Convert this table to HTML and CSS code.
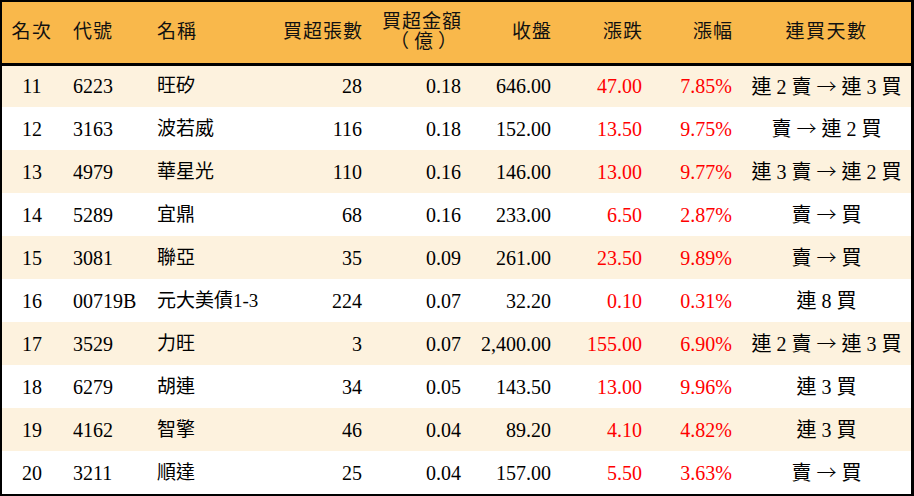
FILE: index.html
```html
<!DOCTYPE html>
<html lang="zh-Hant">
<head>
<meta charset="utf-8">
<title>買超排行</title>
<link rel="stylesheet" href="styles.css">
</head>
<body>
<div class="frame">
<table class="rank">
<colgroup>
<col class="c-rank"><col class="c-code"><col class="c-name"><col class="c-qty"><col class="c-amt"><col class="c-close"><col class="c-chg"><col class="c-pct"><col class="c-days">
</colgroup>
<thead>
<tr>
<th class="ctr">名次</th><th class="lft pad-code">代號</th><th class="lft">名稱</th><th class="rgt">買超張數</th><th class="rgt">買超金額<br><span class="unit">（億）</span></th><th class="rgt">收盤</th><th class="rgt">漲跌</th><th class="rgt">漲幅</th><th class="ctr">連買天數</th>
</tr>
</thead>
<tbody>
<tr><td class="ctr">11</td><td class="lft pad-code">6223</td><td class="lft nm">旺矽</td><td class="rgt">28</td><td class="rgt">0.18</td><td class="rgt">646.00</td><td class="rgt up">47.00</td><td class="rgt up">7.85%</td><td class="ctr">連 2 賣 <span class="arr">→</span> 連 3 買</td></tr>
<tr><td class="ctr">12</td><td class="lft pad-code">3163</td><td class="lft nm">波若威</td><td class="rgt">116</td><td class="rgt">0.18</td><td class="rgt">152.00</td><td class="rgt up">13.50</td><td class="rgt up">9.75%</td><td class="ctr">賣 <span class="arr">→</span> 連 2 買</td></tr>
<tr><td class="ctr">13</td><td class="lft pad-code">4979</td><td class="lft nm">華星光</td><td class="rgt">110</td><td class="rgt">0.16</td><td class="rgt">146.00</td><td class="rgt up">13.00</td><td class="rgt up">9.77%</td><td class="ctr">連 3 賣 <span class="arr">→</span> 連 2 買</td></tr>
<tr><td class="ctr">14</td><td class="lft pad-code">5289</td><td class="lft nm">宜鼎</td><td class="rgt">68</td><td class="rgt">0.16</td><td class="rgt">233.00</td><td class="rgt up">6.50</td><td class="rgt up">2.87%</td><td class="ctr">賣 <span class="arr">→</span> 買</td></tr>
<tr><td class="ctr">15</td><td class="lft pad-code">3081</td><td class="lft nm">聯亞</td><td class="rgt">35</td><td class="rgt">0.09</td><td class="rgt">261.00</td><td class="rgt up">23.50</td><td class="rgt up">9.89%</td><td class="ctr">賣 <span class="arr">→</span> 買</td></tr>
<tr><td class="ctr">16</td><td class="lft pad-code">00719B</td><td class="lft nm">元大美債1-3</td><td class="rgt">224</td><td class="rgt">0.07</td><td class="rgt">32.20</td><td class="rgt up">0.10</td><td class="rgt up">0.31%</td><td class="ctr">連 8 買</td></tr>
<tr><td class="ctr">17</td><td class="lft pad-code">3529</td><td class="lft nm">力旺</td><td class="rgt">3</td><td class="rgt">0.07</td><td class="rgt">2,400.00</td><td class="rgt up">155.00</td><td class="rgt up">6.90%</td><td class="ctr">連 2 賣 <span class="arr">→</span> 連 3 買</td></tr>
<tr><td class="ctr">18</td><td class="lft pad-code">6279</td><td class="lft nm">胡連</td><td class="rgt">34</td><td class="rgt">0.05</td><td class="rgt">143.50</td><td class="rgt up">13.00</td><td class="rgt up">9.96%</td><td class="ctr">連 3 買</td></tr>
<tr><td class="ctr">19</td><td class="lft pad-code">4162</td><td class="lft nm">智擎</td><td class="rgt">46</td><td class="rgt">0.04</td><td class="rgt">89.20</td><td class="rgt up">4.10</td><td class="rgt up">4.82%</td><td class="ctr">連 3 買</td></tr>
<tr><td class="ctr">20</td><td class="lft pad-code">3211</td><td class="lft nm">順達</td><td class="rgt">25</td><td class="rgt">0.04</td><td class="rgt">157.00</td><td class="rgt up">5.50</td><td class="rgt up">3.63%</td><td class="ctr">賣 <span class="arr">→</span> 買</td></tr>
</tbody>
</table>
</div>
</body>
</html>
```

FILE: styles.css
```css
html, body {
  margin: 0;
  padding: 0;
  background: #ffffff;
}

.frame {
  width: 909px;
  border-top: 2px solid #000;
  border-left: 2px solid #000;
  border-right: 3px solid #000;
  border-bottom: 2px solid #000;
}

.rank {
  width: 909px;
  table-layout: fixed;
  border-collapse: collapse;
  border-spacing: 0;
  font-family: "Liberation Serif", "Noto Sans CJK TC", serif;
  font-size: 20px;
  color: #000;
}

.c-rank { width: 60px; }
.c-code { width: 85px; }
.c-name { width: 133px; }
.c-qty { width: 92px; }
.c-amt { width: 99px; }
.c-close { width: 90px; }
.c-chg { width: 91px; }
.c-pct { width: 90px; }
.c-days { width: 169px; }

.rank th {
  background: #f9b84b;
  height: 62px;
  padding: 0 10px;
  font-weight: normal;
  font-size: 19px;
  line-height: 20px;
  color: #111;
  border-bottom: 3px solid #000;
  vertical-align: middle;
  box-sizing: border-box;
  letter-spacing: 1px;
  white-space: nowrap;
}

.rank th.ctr { padding: 0; letter-spacing: 1.5px; }
.rank th.rgt { padding-left: 0; padding-right: 9px; }

.rank td {
  height: 43px;
  box-sizing: border-box;
  padding: 0 10px;
  vertical-align: middle;
  white-space: nowrap;
  line-height: 20px;
}

.rank td.nm { font-size: 19px; }

.rank tbody tr:nth-child(odd) td {
  background: #fdf2de;
}

.ctr { text-align: center; }
.lft { text-align: left; }
.rgt { text-align: right; }
.rank .pad-code { padding-left: 11px; }
.rank td.ctr { padding: 0; }

.up { color: #ff0000; }

.arr {
  font-family: "Noto Sans CJK TC", sans-serif;
  font-weight: 300;
}

.unit {
  letter-spacing: 5px;
}
```
